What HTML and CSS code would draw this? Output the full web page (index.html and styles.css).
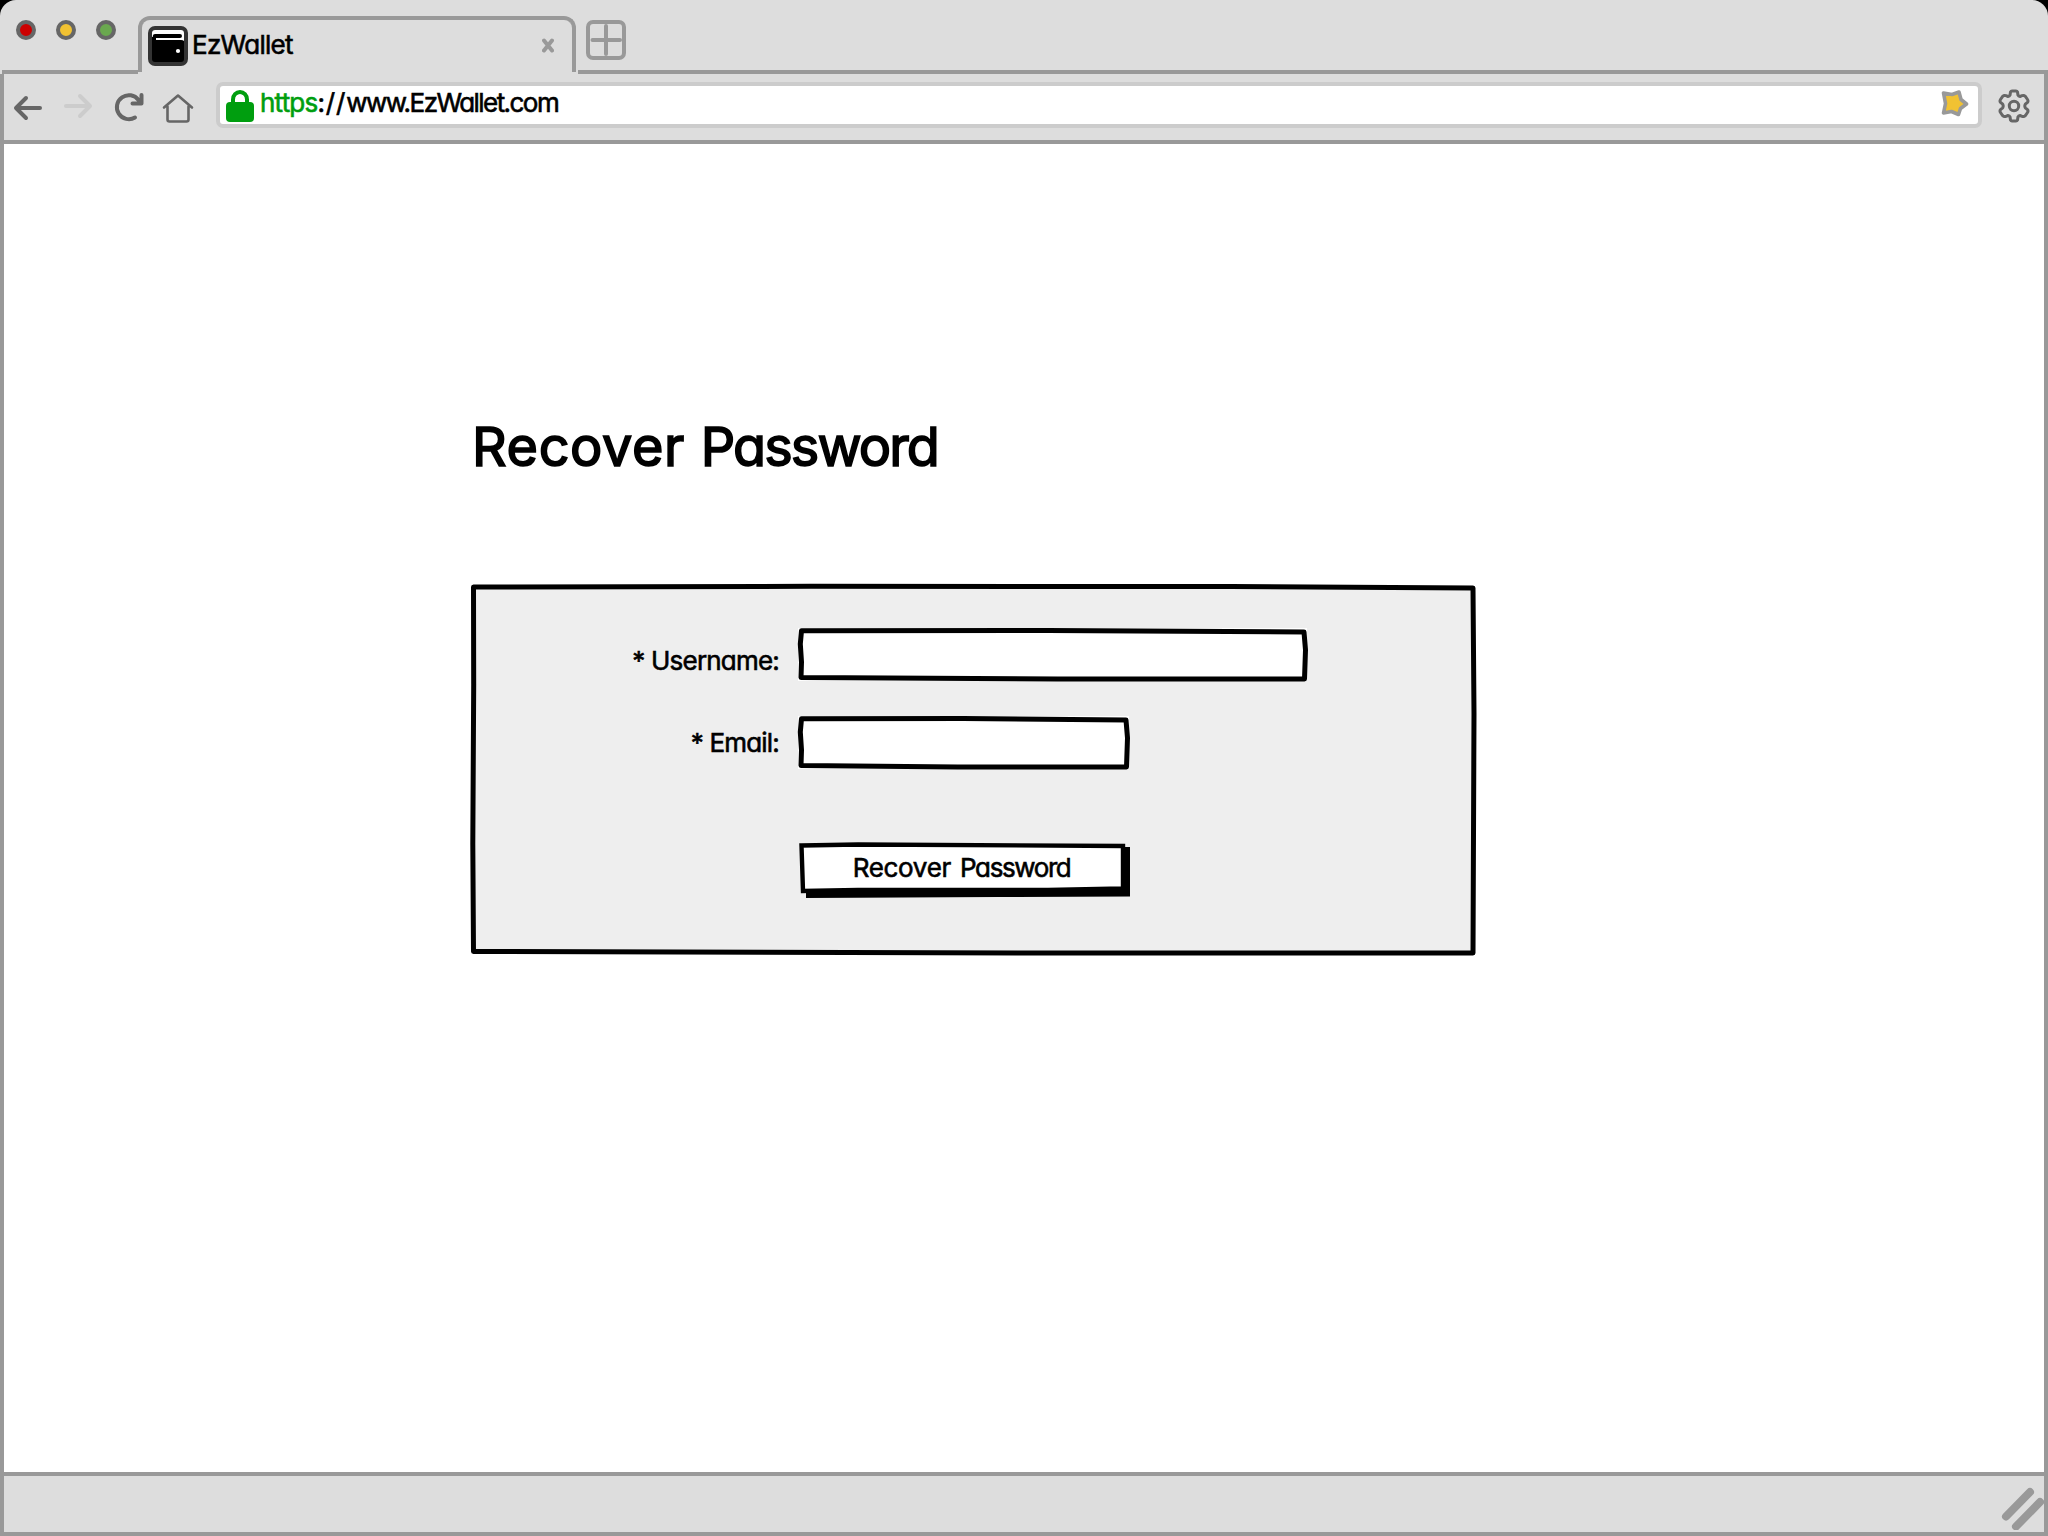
FILE: index.html
```html
<!DOCTYPE html>
<html lang="en">
<head>
<meta charset="utf-8">
<title>EzWallet</title>
<link rel="stylesheet" href="styles.css">
</head>
<body>
<div class="browser">
  <header class="tabstrip">
    <div class="lights">
      <span class="light red"></span>
      <span class="light yellow"></span>
      <span class="light green"></span>
    </div>
    <div class="tab">
      <svg class="favicon" width="40" height="40" viewBox="0 0 40 40">
        <rect x="2" y="2" width="36" height="36" rx="5" fill="#000" stroke="#333" stroke-width="4"/>
        <path d="M4 11V7Q4 4 7 4H33Q36 4 36 7V15Q35 14 33 14H8V11Z" fill="#fff"/>
        <path d="M4.800 14V10Q5 8 7 8H32Q34 8 34 10Q34 12 32 12H8V14.500Z" fill="#000"/>
        <circle cx="30" cy="25" r="2.100" fill="#fff"/>
      </svg>
      <span class="tab-title">EzWallet</span>
      <svg class="tab-close" width="12" height="15" viewBox="0 0 12 15"><path d="M2 2.500L10 12.500M10 2.500L2 12.500" fill="none" stroke="#999" stroke-width="4" stroke-linecap="round"/></svg>
    </div>
    <div class="strip-rest">
      <svg width="40" height="40" viewBox="0 0 40 40" fill="none" stroke="#999" stroke-width="4" stroke-linecap="round"><rect x="2" y="2" width="36" height="36" rx="5"/><path d="M20 6V34M6.500 20H34"/></svg>
    </div>
  </header>
  <nav class="toolbar">
    <svg class="nav-icons" width="190" height="40" viewBox="0 0 190 40" fill="none" stroke="#666" stroke-width="4" stroke-linecap="round" stroke-linejoin="round">
      <path d="M13 10L3 20L13 30M4 20H27"/>
      <path d="M67 8L77 18L67 28M53 18H76" stroke="#ccc"/>
      <path d="M122 29.500A12 12 0 1 1 125.500 12M128.500 7V15.500H119.500"/>
      <path d="M151 19.500L165 7.500L179 19.500M154.500 18.500V31.500Q154.500 33.500 156.500 33.500H173.500Q175.500 33.500 175.500 31.500V18.500" stroke-width="2.600"/>
    </svg>
    <div class="address">
      <svg class="lock" width="28" height="32" viewBox="0 0 28 32"><rect y="12" width="28" height="20" rx="4" fill="#009e0f"/><path d="M7 14V9.500A7 7.500 0 0 1 21 9.500V14" fill="none" stroke="#009e0f" stroke-width="4"/></svg>
      <span class="url"><span class="scheme">https</span><span class="slashes">://</span><span class="host">www.EzWallet.com</span></span>
      <svg class="star" width="28" height="28" viewBox="0 0 28 28"><path d="M2.500 3L11 4.500L18 2L20 9.500L25.500 14L19.500 18.500L17.500 24.500L10.500 21.500L2.500 23L4.500 13.500Z" fill="#f1c232" stroke="#999" stroke-width="3.600" stroke-linejoin="round"/></svg>
    </div>
    <svg class="gear" width="32" height="34" viewBox="0 0 32 34" fill="none" stroke="#666" stroke-width="3"><path stroke-linejoin="round" d="M12.500 3Q13 2 14 2H18Q19 2 19.500 3L20 6.200Q20.500 7.300 22 7.500L24 6.700Q26 6 27.200 7.200L29.500 10.500Q30.500 12 29.500 13.300L27.300 15.200Q26.300 17 27.300 18.800L29.500 20.700Q30.500 22 29.500 23.500L27.200 26.800Q26 28 24 27.300L22 26.500Q20.500 26.700 20 27.800L19.500 31Q19 32 18 32H14Q13 32 12.500 31L12 27.800Q11.500 26.700 10 26.500L8 27.300Q6 28 4.800 26.800L2.500 23.500Q1.500 22 2.500 20.700L4.700 18.800Q5.700 17 4.700 15.200L2.500 13.300Q1.500 12 2.500 10.500L4.800 7.200Q6 6 8 6.700L10 7.500Q11.500 7.300 12 6.200Z"/><circle cx="16" cy="17" r="4.700"/></svg>
  </nav>
  <main class="page">
    <h1 class="title">Recover <span class="title-end">Password</span></h1>
    <form class="panel">
      <svg class="sketch" width="1004" height="371" viewBox="0 0 1004 371"><path d="M2.500 3L340 2.300L760 2.500L1002 4L1003 130L1002 369L560 369L2.500 367.500L1.800 260L2.700 100Z" fill="#eee" stroke="#000" stroke-width="5" stroke-linejoin="round"/></svg>
      <label class="label label-user" for="user">* Username:</label>
      <div class="field field-user">
        <svg class="sketch" width="509" height="53" viewBox="0 0 509 53"><path fill="#fff" d="M0 0H509V40L400 53H0Z"/><path d="M3.500 2.800L250 2.500L506 4L507.500 22L506.500 51L260 51L3 49.500L3.500 34L2.300 16Z" fill="#fff" stroke="#000" stroke-width="5" stroke-linejoin="round"/></svg>
        <input id="user" class="input" type="text">
      </div>
      <label class="label label-email" for="email">* Email:</label>
      <div class="field field-email">
        <svg class="sketch" width="331" height="53" viewBox="0 0 331 53"><path fill="#fff" d="M0 0H331V53H0Z"/><path d="M3.500 2.800L165 2.500L328 4L329.500 22L328.500 51L160 51L3 49.500L3.500 34L2.300 16Z" fill="#fff" stroke="#000" stroke-width="5" stroke-linejoin="round"/></svg>
        <input id="email" class="input" type="text">
      </div>
      <button class="submit" type="button">
        <svg class="sketch" width="331" height="56" viewBox="0 0 331 56"><path d="M8 5H332V54.500L200 55L8 56Z"/><path d="M3.500 3.500L60 2.500L325 4V46.500L250 48L60 48L5 49Z" fill="#fff" stroke="#000" stroke-width="4.400"/></svg>
        <span class="submit-text">Recover <span class="submit-end">Password</span></span>
      </button>
    </form>
  </main>
  <footer class="status">
    <svg width="44" height="44" viewBox="0 0 44 44" stroke="#999" stroke-width="8" stroke-linecap="round"><path d="M6 30.500L30 6M16 40.500L40 16"/></svg>
  </footer>
</div>
</body>
</html>
```
FILE: styles.css
```css
* { box-sizing: border-box; }
body {
  margin: 0;
  background: #000;
  color: #000;
  font-family: Inter, "Open Sans", sans-serif;
  font-feature-settings: "cv11";
  font-size: 26px;
  line-height: 32px;
  -webkit-text-stroke: 0.6px currentColor;
}
svg { display: block; flex: none; }
.browser {
  width: 2048px;
  height: 1536px;
  display: flex;
  flex-direction: column;
  background: #ddd;
  border-radius: 16px 16px 0 0;
  overflow: hidden;
}
.tabstrip { height: 74px; display: flex; flex: none; }
.lights {
  width: 136px;
  margin-left: 2px;
  padding: 20px 0 0 14px;
  display: flex;
  gap: 20px;
  border-bottom: 4px solid #999;
}
.light { width: 20px; height: 20px; border-radius: 50%; border: 4px solid #666; }
.red { background: #c00; }
.yellow { background: #f1c232; }
.green { background: #6aa84f; }
.tab {
  width: 438px;
  height: 56px;
  margin-top: 16px;
  padding: 6px 18px 0 6px;
  border: 4px solid #999;
  border-bottom: 0;
  border-radius: 12px 12px 0 0;
  display: flex;
}
.tab-title { margin: 3px auto 0 4px; letter-spacing: -0.7px; white-space: nowrap; }
.tab-close { margin-top: 12px; }
.strip-rest {
  flex: 1;
  margin-left: 2px;
  padding: 20px 0 0 8px;
  border-bottom: 4px solid #999;
}
.toolbar {
  height: 70px;
  flex: none;
  display: flex;
  border: solid #999;
  border-width: 0 4px 4px;
  padding-left: 9px;
}
.nav-icons { margin-top: 14px; }
.address {
  width: 1766px;
  height: 46px;
  margin: 8px 0 0 13px;
  padding: 0 9px 0 6px;
  display: flex;
  background: #fff;
  border: 4px solid #ccc;
  border-radius: 7px;
}
.lock { margin-top: 4px; }
.url { margin: 1px auto 0 6px; white-space: nowrap; }
.scheme { color: #009e0f; letter-spacing: -0.8px; }
.slashes { letter-spacing: 0.9px; }
.host { letter-spacing: -1.55px; }
.star { margin-top: 4px; }
.gear { margin: 15px 0 0 16px; }
.page {
  flex: 1;
  padding: 270px 0 0 467px;
  background: #fff;
  border: solid #999;
  border-width: 0 4px;
}
.title {
  margin: 0 0 104px 1px;
  font-size: 54px;
  line-height: 66px;
  font-weight: 400;
  letter-spacing: 0.6px;
  word-spacing: 0;
  white-space: nowrap;
  -webkit-text-stroke-width: 1.6px;
}
.title-end { letter-spacing: -1.9px; }
.panel {
  position: relative;
  width: 1004px;
  height: 371px;
  padding-top: 44px;
  display: grid;
  grid-template-columns: 308px 1fr;
  grid-template-rows: 53px 53px 56px;
  column-gap: 19px;
  row-gap: 35px;
}
.sketch { position: absolute; left: 0; top: 0; overflow: visible; }
.label { position: relative; justify-self: end; white-space: nowrap; letter-spacing: -0.8px; }
.label-user { padding-top: 17px; }
.label-email { padding-top: 11px; }
.field { position: relative; height: 53px; }
.field-user { width: 509px; }
.field-email { width: 331px; }
.input {
  position: relative;
  width: 100%;
  height: 100%;
  padding: 0 12px;
  border: 0;
  background: transparent;
  font: inherit;
  outline: 0;
}
.submit {
  grid-column: 2;
  position: relative;
  width: 331px;
  height: 56px;
  margin-top: 38px;
  padding: 0 4px 4px 0;
  border: 0;
  background: transparent;
  color: inherit;
  font: inherit;
  font-feature-settings: inherit;
  letter-spacing: -0.3px;
  word-spacing: 2px;
}
.submit-text { position: relative; }
.submit-end { letter-spacing: -1.4px; }
.status {
  height: 64px;
  flex: none;
  display: flex;
  justify-content: flex-end;
  padding: 10px 0 0;
  border: 4px solid #999;
}
```
